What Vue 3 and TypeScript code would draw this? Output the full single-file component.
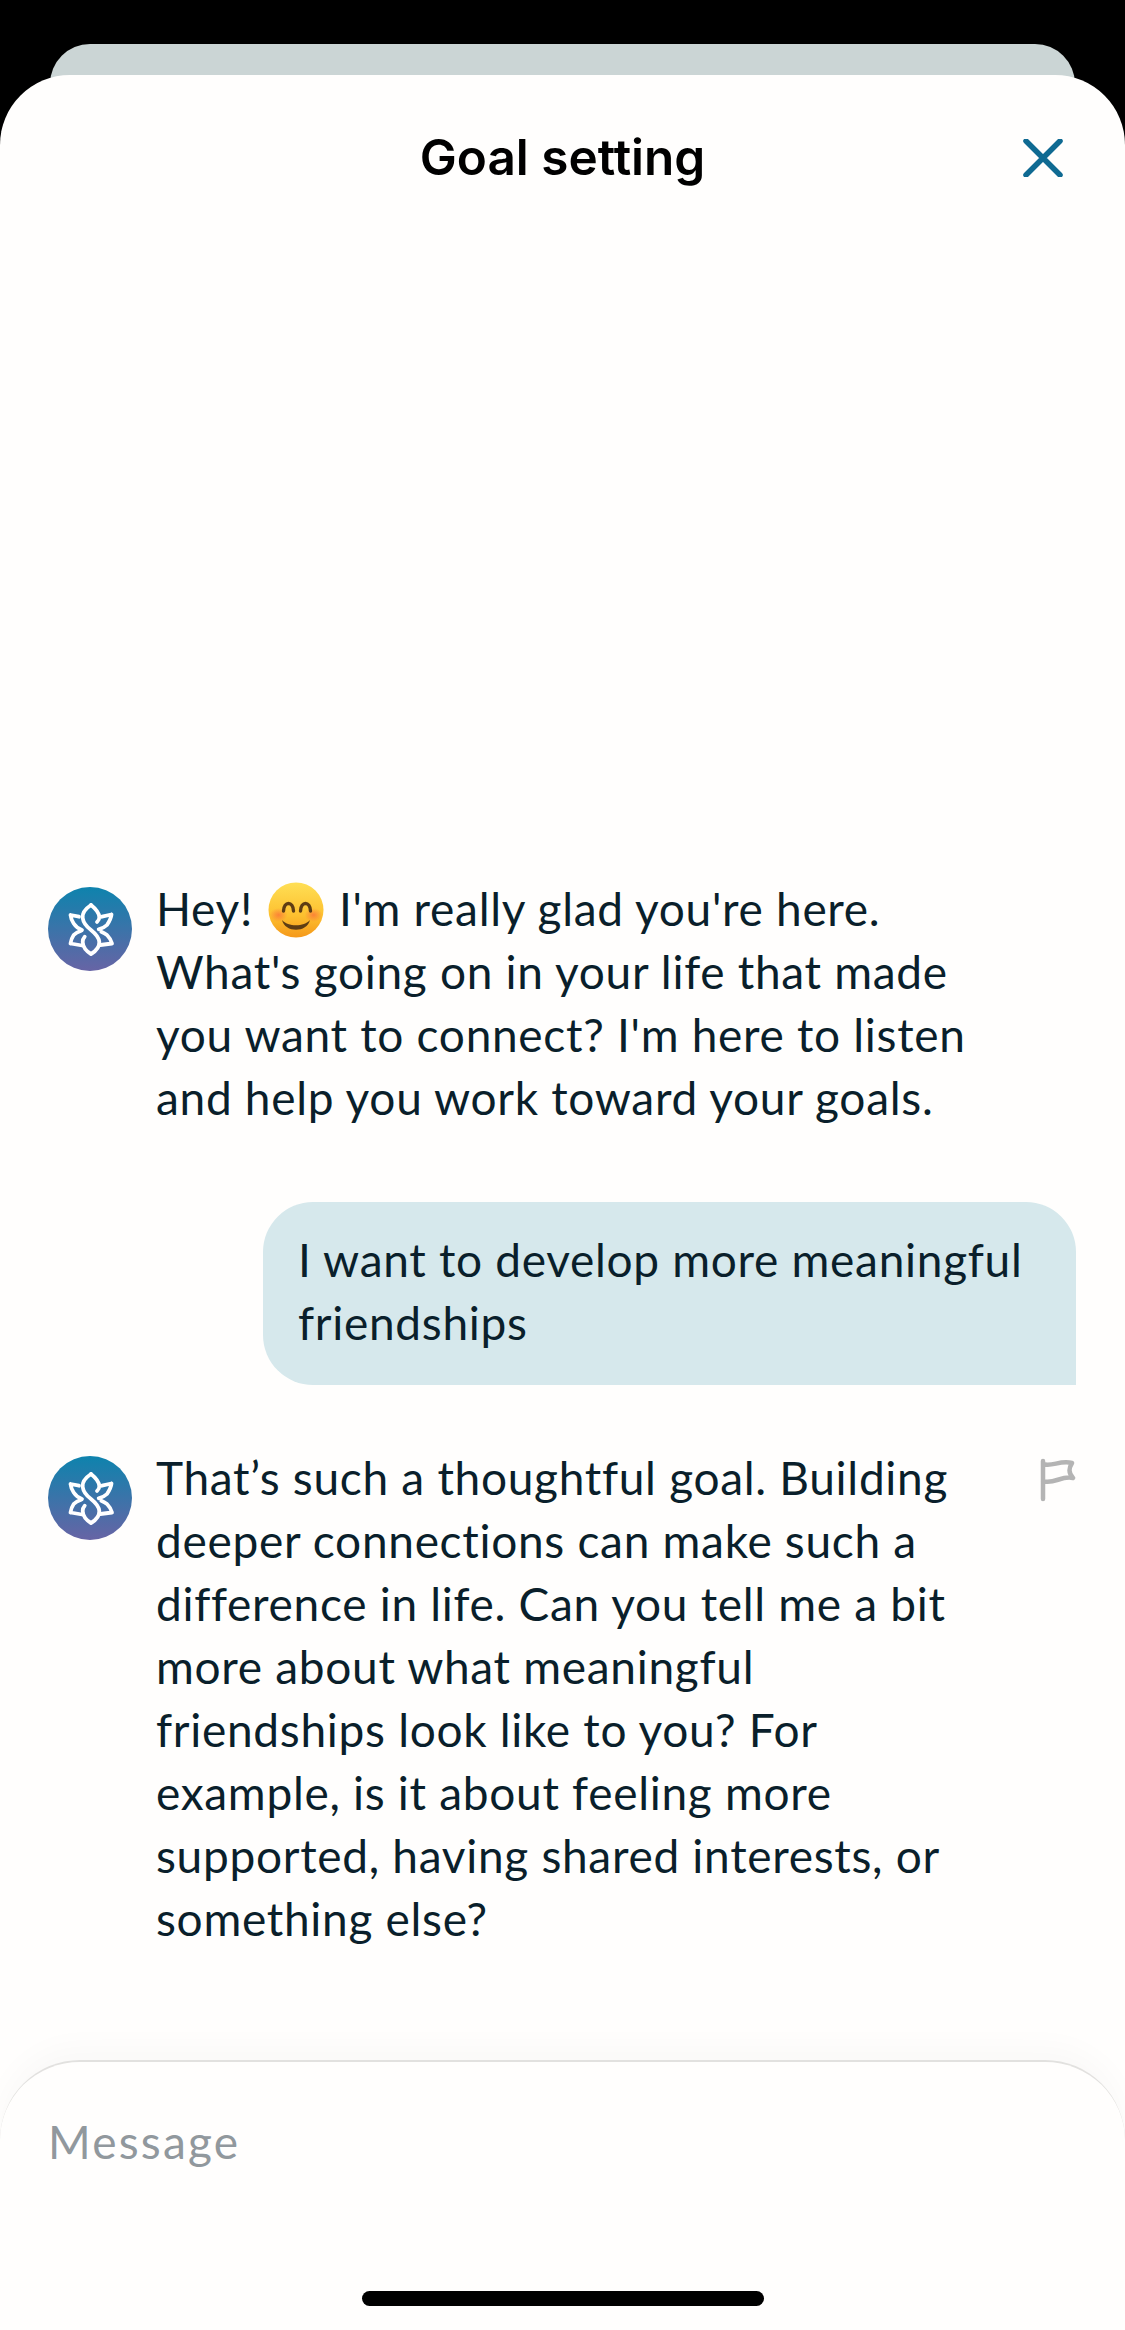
<script setup lang="ts">
const firstLines = ["What's going on in your life that made", 'you want to connect? I\'m here to listen', 'and help you work toward your goals.']
const userLines = ['I want to develop more meaningful', 'friendships']
const replyLines = [
  'That’s such a thoughtful goal. Building',
  'deeper connections can make such a',
  'difference in life. Can you tell me a bit',
  'more about what meaningful',
  'friendships look like to you? For',
  'example, is it about feeling more',
  'supported, having shared interests, or',
  'something else?'
]
</script>

<template>
  <div class="page">
    <div class="back-card"></div>
    <div class="sheet">
      <header class="header">
        <h1 class="title">Goal setting</h1>
        <svg class="close" viewBox="0 0 40 38" fill="none">
          <path d="M3 2 L37 36 M37 2 L3 36" stroke="#0f6a92" stroke-width="5.5" stroke-linecap="round" />
        </svg>
      </header>

      <main class="messages">
        <div class="msg">
          <svg class="avatar" viewBox="0 0 84 84" fill="none">
            <defs>
              <linearGradient id="av1" x1="0" y1="0" x2="0" y2="1">
                <stop offset="0" stop-color="#0e83ad" />
                <stop offset="1" stop-color="#6764a5" />
              </linearGradient>
            </defs>
            <circle cx="42" cy="42" r="42" fill="url(#av1)" />
            <g stroke="#fff" stroke-width="3.8" stroke-linejoin="round" stroke-linecap="round">
              <path d="M43 18 C37 22 34 26 34.7 31 C35.5 37 39 40 43 43 C48 47 51 51 51.3 55 C51.5 60 48 64 43 67 C38 64 35 60 34.7 55 C34.7 53 35.5 51 36.7 49.7" />
              <path d="M43 18 C48 22 51 26 51.3 30 C51.5 32 50 34 49 35" />
              <path d="M22.5 28 L31 29.7 M22.5 28 C23 32 24 34 25.7 36.5 C28 40 31 42 34 43" />
              <path d="M22.5 56.5 L34 58.5 M22.5 56.5 C23 53 24 50.5 25.7 48 C28 45.5 31 44.5 33.3 43.7" />
              <path d="M63.5 27.5 L54 29.7 M63.5 27.5 C63 32 61 35 59 38 C56.5 40.5 53.5 41.5 50.7 42.3" />
              <path d="M64 56.5 L52.3 58 M64 56.5 C63 53 61 50 59 48 C57 46.5 55 45.5 53.3 44.7" />
            </g>
          </svg>
          <p class="text">
            Hey!
            <svg class="emoji" viewBox="0 0 56 56" fill="none">
              <defs>
                <linearGradient id="em" x1="0" y1="0" x2="0" y2="1">
                  <stop offset="0" stop-color="#ffdf55" />
                  <stop offset="0.6" stop-color="#fdc02f" />
                  <stop offset="1" stop-color="#f5981a" />
                </linearGradient>
                <radialGradient id="blush">
                  <stop offset="0" stop-color="#fb6f3a" stop-opacity="0.75" />
                  <stop offset="1" stop-color="#fb6f3a" stop-opacity="0" />
                </radialGradient>
              </defs>
              <circle cx="28" cy="28" r="27.5" fill="url(#em)" />
              <ellipse cx="10.5" cy="33" rx="9" ry="7" fill="url(#blush)" />
              <ellipse cx="45.5" cy="33" rx="9" ry="7" fill="url(#blush)" />
              <path d="M15.5 29 C16 19 25 19 25.5 29 M32.5 29 C33 19 42 19 42.5 29" stroke="#5e3d14" stroke-width="3.4" stroke-linecap="round" />
              <path d="M14 38 C20 45 36 45 42 38 C39 51 17 51 14 38 Z" fill="#5e3d14" />
            </svg>
            I'm really glad you're here.
            <template v-for="line in firstLines" :key="line"><br />{{ line }}</template>
          </p>
        </div>

        <div class="bubble">
          <p class="text">
            <template v-for="(line, i) in userLines" :key="line"><br v-if="i" />{{ line }}</template>
          </p>
        </div>

        <div class="msg">
          <svg class="avatar" viewBox="0 0 84 84" fill="none">
            <circle cx="42" cy="42" r="42" fill="url(#av1)" />
            <g stroke="#fff" stroke-width="3.8" stroke-linejoin="round" stroke-linecap="round">
              <path d="M43 18 C37 22 34 26 34.7 31 C35.5 37 39 40 43 43 C48 47 51 51 51.3 55 C51.5 60 48 64 43 67 C38 64 35 60 34.7 55 C34.7 53 35.5 51 36.7 49.7" />
              <path d="M43 18 C48 22 51 26 51.3 30 C51.5 32 50 34 49 35" />
              <path d="M22.5 28 L31 29.7 M22.5 28 C23 32 24 34 25.7 36.5 C28 40 31 42 34 43" />
              <path d="M22.5 56.5 L34 58.5 M22.5 56.5 C23 53 24 50.5 25.7 48 C28 45.5 31 44.5 33.3 43.7" />
              <path d="M63.5 27.5 L54 29.7 M63.5 27.5 C63 32 61 35 59 38 C56.5 40.5 53.5 41.5 50.7 42.3" />
              <path d="M64 56.5 L52.3 58 M64 56.5 C63 53 61 50 59 48 C57 46.5 55 45.5 53.3 44.7" />
            </g>
          </svg>
          <p class="text">
            <template v-for="(line, i) in replyLines" :key="line"><br v-if="i" />{{ line }}</template>
          </p>
          <svg class="flag" viewBox="0 0 36 44" fill="none">
            <path
              d="M3 3 V41 M3 6 C12 9 20 2 32 5 C29 10 28 14 33 20 C22 17 13 27 3 23"
              stroke="#b4b4b4"
              stroke-width="4.5"
              stroke-linecap="round"
              stroke-linejoin="round"
            />
          </svg>
        </div>
      </main>

      <footer class="composer">
        <div class="placeholder">Message</div>
        <div class="home-bar"></div>
      </footer>
    </div>
  </div>
</template>

<style scoped>
.page {
  width: 1125px;
  height: 2330px;
  background: #000;
  padding-top: 44px;
  box-sizing: border-box;
  display: flex;
  flex-direction: column;
  overflow: hidden;
  font-family: Lato, "Open Sans", sans-serif;
}

.back-card {
  flex: none;
  height: 60px;
  margin: 0 50px;
  background: #cbd5d5;
  border-radius: 40px 40px 0 0;
}

.sheet {
  flex: 1;
  min-height: 0;
  margin-top: -29px;
  background: #fffefd;
  border-radius: 70px 70px 0 0;
  display: flex;
  flex-direction: column;
  position: relative;
}

.header {
  flex: none;
  height: 164px;
  display: flex;
  align-items: center;
  justify-content: center;
  position: relative;
}

.title {
  margin: 0;
  font-family: Inter, sans-serif;
  font-size: 49.5px;
  font-weight: 600;
  color: #000;
}

.close {
  position: absolute;
  right: 62px;
  top: 64px;
  width: 40px;
  height: 38px;
}

.messages {
  flex: 1;
  min-height: 0;
  display: flex;
  flex-direction: column;
  justify-content: flex-end;
  padding: 0 49px 109px 48px;
}

.msg {
  display: flex;
  align-items: flex-start;
  position: relative;
}

.avatar {
  flex: none;
  width: 84px;
  height: 84px;
  margin: 9px 24px 0 0;
}

.text {
  margin: -1px 0 1px;
  font-size: 46px;
  letter-spacing: 0.7px;
  line-height: 63px;
  color: #0a1f2b;
  white-space: nowrap;
}

.emoji {
  width: 56px;
  height: 56px;
  vertical-align: -12px;
  margin: 0 2px 0 3px;
}

.bubble {
  align-self: flex-end;
  width: 813px;
  box-sizing: border-box;
  margin: 72px 0 62px;
  padding: 27px 35px 30px;
  background: #d6e8ec;
  border-radius: 50px 50px 0 50px;
}

.flag {
  position: absolute;
  right: 0;
  top: 11px;
  width: 36px;
  height: 44px;
}

.composer {
  flex: none;
  height: 270px;
  box-sizing: border-box;
  padding: 50px 48px 0;
  border-top: 2px solid #e2e1df;
  border-radius: 80px 80px 0 0;
  background: #fffefd;
  box-shadow: 0 -14px 30px rgba(0, 0, 0, 0.025);
  position: relative;
}

.placeholder {
  font-size: 46px;
  letter-spacing: 2.2px;
  line-height: 60px;
  color: #91989d;
}

.home-bar {
  position: absolute;
  left: 362px;
  bottom: 24px;
  width: 402px;
  height: 15px;
  border-radius: 8px;
  background: #000;
}
</style>

<style>
html,
body {
  margin: 0;
  background: #000;
}
</style>
